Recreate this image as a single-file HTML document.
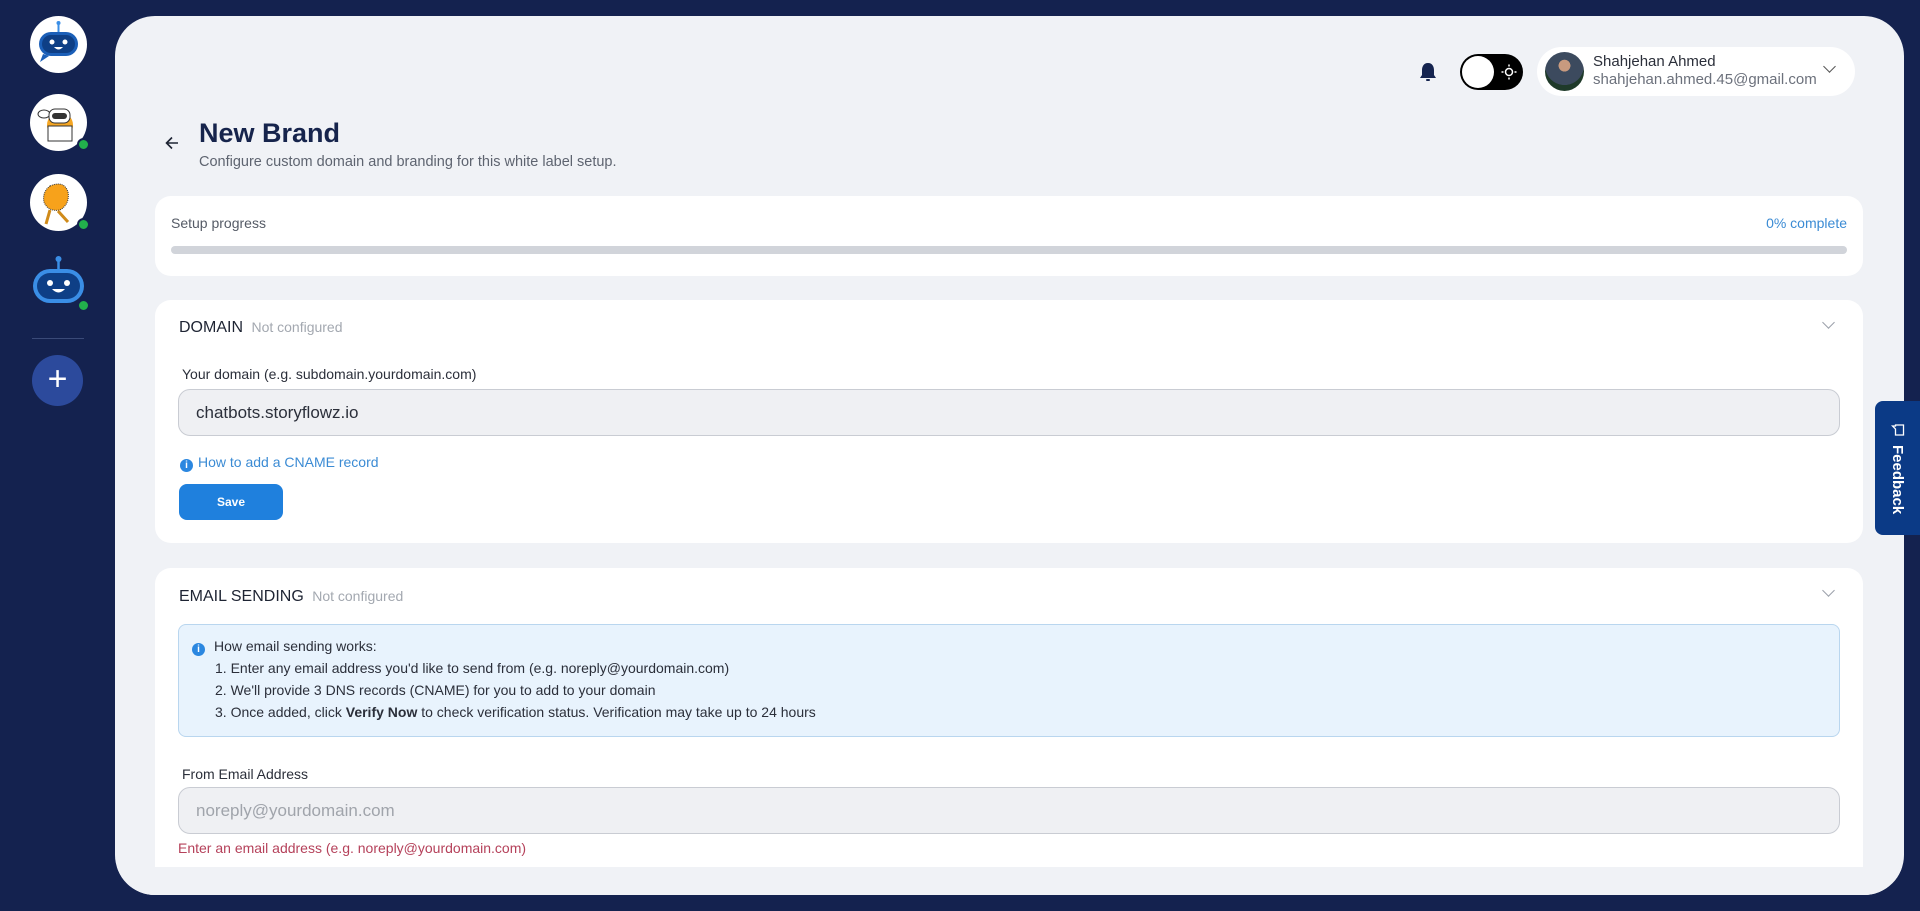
<!DOCTYPE html>
<html><head><meta charset="utf-8"><style>
*{box-sizing:border-box;margin:0;padding:0}
body{width:1920px;height:911px;background:#14224f;font-family:"Liberation Sans",sans-serif;position:relative;overflow:hidden;color:#1e2433}
.av{position:absolute;left:30px;width:57px;height:57px;border-radius:50%;background:#fff;overflow:visible}
.dot{position:absolute;right:-3px;bottom:0;width:13px;height:13px;border-radius:50%;background:#22b14c;border:2px solid #14224f}
.main{position:absolute;left:115px;top:16px;width:1789px;height:879px;background:#f0f2f6;border-radius:40px;overflow:hidden}
.card{position:absolute;left:40px;width:1708px;background:#fff;border-radius:16px}
.abs{position:absolute}
.inp{position:absolute;left:23px;width:1662px;height:47px;border:1px solid #c9ccd3;border-radius:12px;background:#eff0f3;font-size:17px;padding-left:17px;line-height:45px}
.chev{position:absolute;right:30px;width:9px;height:9px;border-right:1.5px solid #9aa0aa;border-bottom:1.5px solid #9aa0aa;transform:rotate(45deg)}
</style></head><body>
<div class="av" style="top:16px"><svg width="57" height="57" viewBox="0 0 57 57"><line x1="28.5" y1="8" x2="28.5" y2="16" stroke="#3a8ee6" stroke-width="2"/><circle cx="28.5" cy="7" r="2" fill="#3a8ee6"/><rect x="9" y="16" width="39" height="24" rx="12" fill="#1b5fb8"/><rect x="12" y="19" width="33" height="18" rx="9" fill="#0e3f86"/><circle cx="22" cy="26" r="2.5" fill="#fff"/><circle cx="35" cy="26" r="2.5" fill="#fff"/><path d="M24 31 Q28.5 36 33 31Z" fill="#fff"/><path d="M13 38 L10 46 L19 40Z" fill="#1b5fb8"/></svg></div>
<div class="av" style="top:94px"><svg width="57" height="57" viewBox="0 0 57 57"><ellipse cx="14" cy="20" rx="6" ry="4" fill="#fff" stroke="#333"/><circle cx="30" cy="31" r="13" fill="#f5a623"/><rect x="19" y="15" width="21" height="14" rx="6" fill="#fff" stroke="#333"/><rect x="22" y="19" width="15" height="6" rx="3" fill="#333"/><rect x="18" y="32" width="24" height="15" fill="#fff" stroke="#333"/></svg><div class="dot"></div></div>
<div class="av" style="top:174px"><svg width="57" height="57" viewBox="0 0 57 57"><path d="M20 12 Q34 6 38 18 Q40 30 30 36 Q18 38 14 28 Q12 18 20 12Z" fill="#f7a21b" stroke="#333" stroke-dasharray="1 1"/><path d="M20 36 L16 50 M28 37 L38 48" stroke="#d08b1a" stroke-width="3"/></svg><div class="dot"></div></div>
<div class="av" style="top:255px;background:none"><svg width="57" height="57" viewBox="0 0 57 57"><line x1="28.5" y1="4" x2="28.5" y2="15" stroke="#3a8ee6" stroke-width="2.5"/><circle cx="28.5" cy="4" r="3" fill="#3a8ee6"/><rect x="3" y="14" width="51" height="34" rx="17" fill="#3a8ee6"/><rect x="7" y="18" width="43" height="26" rx="13" fill="#0e3f86"/><circle cx="20" cy="28" r="3" fill="#fff"/><circle cx="37" cy="28" r="3" fill="#fff"/><path d="M22 34 Q28.5 41 35 34Z" fill="#fff"/></svg><div class="dot"></div></div>
<div class="abs" style="left:32px;top:338px;width:52px;height:1px;background:#3a4a78"></div>
<div class="abs" style="left:32px;top:355px;width:51px;height:51px;border-radius:50%;background:#2c4a9c;color:#fff;font-size:34px;line-height:48px;text-align:center;font-weight:300">+</div>

<div class="main">
 <svg class="abs" style="left:1304px;top:46px" width="18" height="20" viewBox="0 0 18 20"><path d="M9 1 C4.5 1 3 5 3 8 L3 13 L1 16 L17 16 L15 13 L15 8 C15 5 13.5 1 9 1Z" fill="#15244f"/><rect x="7" y="17" width="4" height="2" rx="1" fill="#15244f"/></svg>
 <div class="abs" style="left:1345px;top:38px;width:63px;height:36px;border-radius:18px;background:#000"><div class="abs" style="left:2px;top:2px;width:32px;height:32px;border-radius:50%;background:#fff"></div><svg class="abs" style="left:41px;top:10px" width="16" height="16" viewBox="0 0 16 16"><circle cx="8" cy="8" r="3.5" fill="none" stroke="#fff" stroke-width="1.5"/><g stroke="#fff" stroke-width="1.5"><line x1="8" y1="0.5" x2="8" y2="2.5"/><line x1="8" y1="13.5" x2="8" y2="15.5"/><line x1="0.5" y1="8" x2="2.5" y2="8"/><line x1="13.5" y1="8" x2="15.5" y2="8"/></g></svg></div>
 <div class="abs" style="left:1422px;top:31px;width:318px;height:49px;border-radius:25px;background:#fff">
  <div class="abs" style="left:8px;top:5px;width:39px;height:39px;border-radius:50%;background:radial-gradient(circle at 50% 35%,#c89a7f 0 18%,#3c4a5e 19% 60%,#1f3a2a 61%)"></div>
  <div class="abs" style="left:56px;top:6px;font-size:15px;color:#2b2f3a">Shahjehan Ahmed</div>
  <div class="abs" style="left:56px;top:24px;font-size:15px;color:#6c717c">shahjehan.ahmed.45@gmail.com</div>
  <div class="abs" style="left:288px;top:15px;width:9px;height:9px;border-right:1.5px solid #555;border-bottom:1.5px solid #555;transform:rotate(45deg)"></div>
 </div>
 <svg class="abs" style="left:50px;top:120px" width="14" height="14" viewBox="0 0 14 14"><path d="M13 7H1.5M7 1.5L1.5 7L7 12.5" fill="none" stroke="#1e2433" stroke-width="1.6"/></svg>
 <div class="abs" style="left:84px;top:102px;font-size:27px;font-weight:bold;color:#16244c">New Brand</div>
 <div class="abs" style="left:84px;top:138px;font-size:14.5px;color:#5e6470">Configure custom domain and branding for this white label setup.</div>
 <div class="card" style="top:180px;height:80px">
  <div class="abs" style="left:16px;top:19px;font-size:14px;color:#555b66">Setup progress</div>
  <div class="abs" style="right:16px;top:19px;font-size:14px;color:#3b8bd4">0% complete</div>
  <div class="abs" style="left:16px;top:50px;width:1676px;height:8px;border-radius:4px;background:#d1d4da"></div>
 </div>
 <div class="card" style="top:284px;height:243px">
  <div class="abs" style="left:24px;top:19px;font-size:16px;color:#1e2433">DOMAIN <span style="font-size:14px;color:#a3a8b0;margin-left:4px">Not configured</span></div>
  <div class="chev" style="top:18px"></div>
  <div class="abs" style="left:27px;top:66px;font-size:14px;color:#2b2f3a">Your domain (e.g. subdomain.yourdomain.com)</div>
  <div class="inp" style="top:89px;color:#2b2f3a">chatbots.storyflowz.io</div>
  <div class="abs" style="left:25px;top:154px;font-size:14px;color:#3b8bd4"><span style="display:inline-block;width:13px;height:13px;border-radius:50%;background:#2b87e0;color:#fff;font-size:10px;line-height:13px;text-align:center;font-weight:bold;margin-right:5px;vertical-align:-1px">i</span>How to add a CNAME record</div>
  <div class="abs" style="left:24px;top:184px;width:104px;height:36px;border-radius:8px;background:#1f80dd;color:#fff;font-size:12px;font-weight:bold;text-align:center;line-height:36px">Save</div>
 </div>
 <div class="card" style="top:552px;height:360px">
  <div class="abs" style="left:24px;top:20px;font-size:16px;color:#1e2433">EMAIL SENDING <span style="font-size:14px;color:#a3a8b0;margin-left:4px">Not configured</span></div>
  <div class="chev" style="top:18px"></div>
  <div class="abs" style="left:23px;top:56px;width:1662px;height:113px;border:1px solid #b9d6ef;border-radius:8px;background:#e8f3fd;font-size:14px;color:#2b2f3a;line-height:22px">
   <div class="abs" style="left:13px;top:10px"><span style="display:inline-block;width:13px;height:13px;border-radius:50%;background:#2b87e0;color:#fff;font-size:10px;line-height:13px;text-align:center;font-weight:bold;margin-right:9px;vertical-align:-1px">i</span>How email sending works:</div>
   <div class="abs" style="left:36px;top:32px">1. Enter any email address you'd like to send from (e.g. noreply@yourdomain.com)<br>2. We'll provide 3 DNS records (CNAME) for you to add to your domain<br>3. Once added, click <b>Verify Now</b> to check verification status. Verification may take up to 24 hours</div>
  </div>
  <div class="abs" style="left:27px;top:198px;font-size:14px;color:#2b2f3a">From Email Address</div>
  <div class="inp" style="top:219px;color:#a0a4ab">noreply@yourdomain.com</div>
  <div class="abs" style="left:23px;top:272px;font-size:14px;color:#b5415a">Enter an email address (e.g. noreply@yourdomain.com)</div>
 </div>
 <div class="abs" style="left:0;top:851px;width:1789px;height:28px;background:#f0f2f6"></div>
</div>
<div class="abs" style="left:1875px;top:401px;width:50px;height:134px;border-radius:8px 0 0 8px;background:#0b3a86;color:#fff">
 <svg class="abs" style="left:16px;top:22px" width="14" height="14" viewBox="0 0 14 14"><path d="M2 1.5H12V9.5H6L3 12.5V9.5H2Z" fill="none" stroke="#fff" stroke-width="1.3" transform="rotate(90 7 7)"/></svg>
 <div class="abs" style="left:31px;top:44px;transform-origin:0 0;transform:rotate(90deg);font-size:15px;font-weight:bold;white-space:nowrap">Feedback</div>
</div>
</body></html>
